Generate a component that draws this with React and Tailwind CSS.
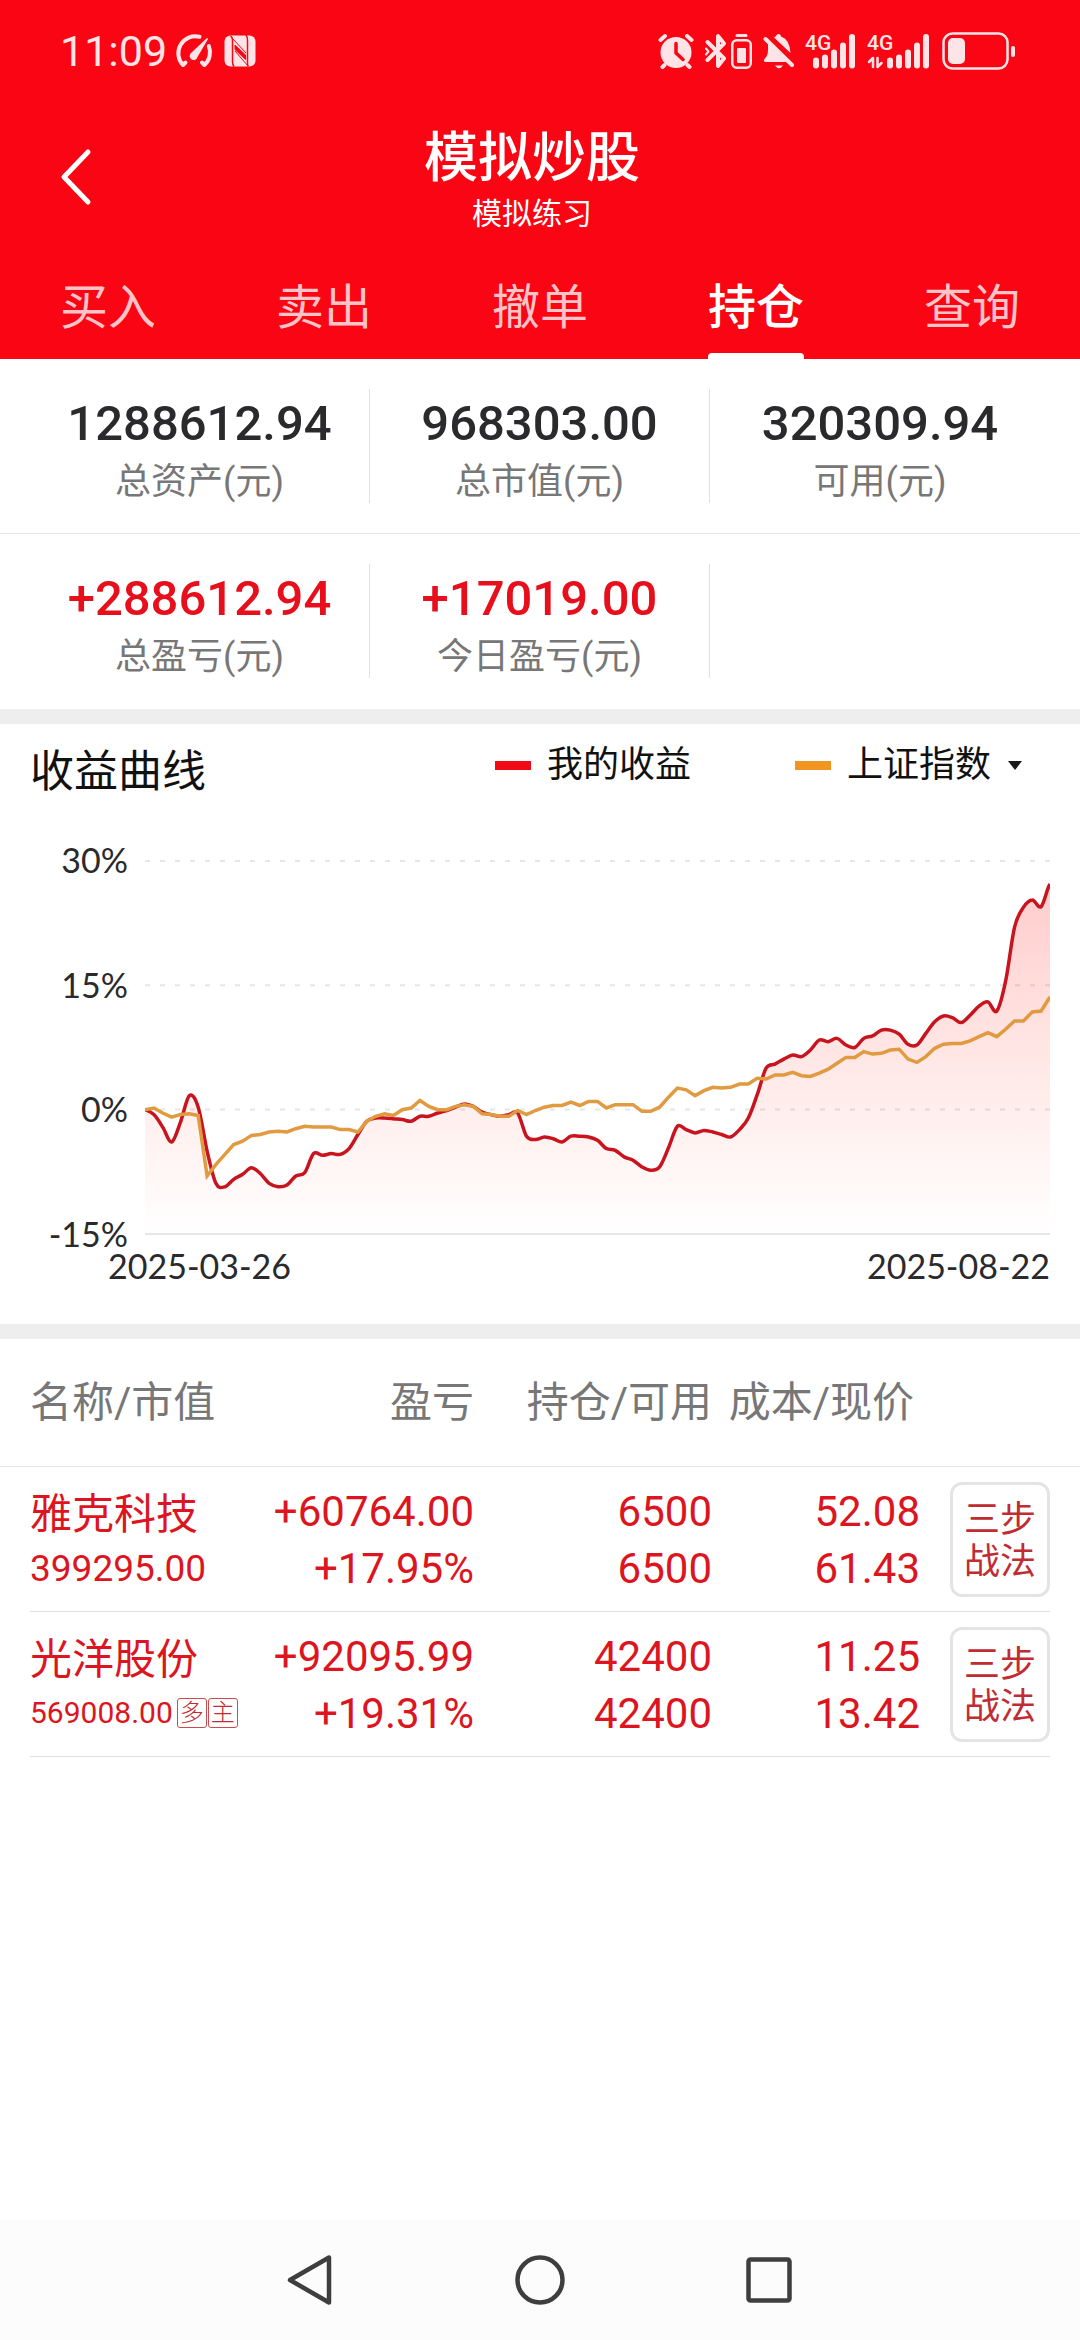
import React from "react";

const TABS = ["买入", "卖出", "撤单", "持仓", "查询"];

const STATS = [
  [
    { value: "1288612.94", label: "总资产(元)" },
    { value: "968303.00", label: "总市值(元)" },
    { value: "320309.94", label: "可用(元)" },
  ],
  [
    { value: "+288612.94", label: "总盈亏(元)", up: true },
    { value: "+17019.00", label: "今日盈亏(元)", up: true },
    null,
  ],
];

const HOLDINGS = [
  {
    name: "雅克科技",
    marketValue: "399295.00",
    tags: [],
    profit: ["+60764.00", "+17.95%"],
    shares: ["6500", "6500"],
    price: ["52.08", "61.43"],
  },
  {
    name: "光洋股份",
    marketValue: "569008.00",
    tags: ["多", "主"],
    profit: ["+92095.99", "+19.31%"],
    shares: ["42400", "42400"],
    price: ["11.25", "13.42"],
  },
];

/* Daily cumulative returns in percent */
const MINE = [
  0, -0.6, -2.1, -3.9, -1.5, 1.7, 0.3, -5, -8.9, -9.3, -8.4, -7.8, -7, -7.7, -8.9, -9.3, -9.1, -8,
  -7.6, -5.3, -5.5, -5.3, -5.4, -4.7, -3, -1.4, -1, -1, -1.1, -1.2, -1.4, -0.8, -0.8, -0.4, -0.1,
  0.3, 0.7, 0.4, -0.3, -0.6, -0.8, -0.6, -0.4, -3.2, -3.6, -3.3, -3.5, -3.9, -3.2, -3.2, -3.3, -3.7,
  -4.7, -4.9, -5.7, -6.1, -6.9, -7.3, -6.9, -4.6, -2, -2.4, -2.8, -2.5, -2.7, -3, -3.3, -2.4, -1,
  1.8, 5, 5.5, 6.1, 6.6, 6.4, 7.2, 8.4, 8.2, 8.6, 7.8, 7.5, 8.6, 8.9, 9.6, 9.6, 9.1, 7.9, 7.8, 9.2,
  10.6, 11.3, 11.1, 10.5, 11.4, 12.5, 13, 11.9, 15.5, 22, 24.4, 25.3, 24.5, 27.2,
];
const INDEX = [
  0, 0.2, -0.4, -0.9, -0.6, -0.5, -0.7, -8, -6.6, -5.4, -4.2, -3.8, -3.1, -3, -2.7, -2.6, -2.7, -2.3,
  -2, -2.1, -2.1, -2.1, -2.4, -2.4, -2.7, -1.4, -0.8, -0.5, -0.7, 0, 0.2, 1.1, 0.4, 0, 0, 0.4, 0.6,
  0.4, -0.5, -0.6, -0.8, -0.8, -0.1, -0.6, -0.1, 0.3, 0.5, 0.5, 0.9, 0.5, 1, 1, 0.2, 0.6, 0.6, 0.6,
  -0.2, -0.2, 0.3, 1.5, 2.6, 2.4, 1.7, 2.3, 2.7, 2.6, 2.7, 3.1, 3.1, 3.8, 3.7, 4.2, 4.2, 4.5, 4.1, 4,
  4.4, 4.9, 5.6, 6.3, 6.3, 7, 6.7, 6.8, 7.2, 7.3, 6.1, 5.7, 6.4, 7.4, 7.9, 8, 8, 8.3, 8.8, 9.3, 8.8,
  9.7, 10.7, 10.7, 11.8, 11.9, 13.6,
];

const CHART_W = 905;
const CHART_H = 375;
const toPoint = (v, i, all) => [(i * CHART_W) / (all.length - 1), 1 + ((30 - v) / 45) * 373];

function straightPath(points) {
  return "M" + points.map((p) => p[0].toFixed(1) + " " + p[1].toFixed(1)).join("L");
}

/* Cubic path whose tangent at a point follows its two neighbours */
function smoothPath(points) {
  const n = points.length - 1;
  const slope = points.map((_, i) => {
    const a = points[Math.max(i - 1, 0)][1];
    const b = points[Math.min(i + 1, n)][1];
    return (b - a) / 2;
  });
  let d = `M${points[0][0]} ${points[0][1].toFixed(1)}`;
  for (let i = 0; i < n; i++) {
    const [x0, y0] = points[i];
    const [x1, y1] = points[i + 1];
    const t = (x1 - x0) / 3;
    d += `C${(x0 + t).toFixed(1)} ${(y0 + slope[i] / 3).toFixed(1)} ${(x1 - t).toFixed(1)} ${(y1 - slope[i + 1] / 3).toFixed(1)} ${x1.toFixed(1)} ${y1.toFixed(1)}`;
  }
  return d;
}

function ReturnsChart() {
  const mine = smoothPath(MINE.map(toPoint));
  return (
    <svg viewBox="0 0 905 375" className="h-auto w-full" role="img" aria-label="收益曲线图">
      <defs>
        <linearGradient id="area" x1="0" y1="0" x2="0" y2="1">
          <stop offset="0" stopColor="#ff0000" stopOpacity="0.2" />
          <stop offset="0.95" stopColor="#ff2000" stopOpacity="0.01" />
          <stop offset="1" stopColor="#ff2000" stopOpacity="0" />
        </linearGradient>
      </defs>
      <g stroke="#e6e6e6" strokeWidth="2">
        <path d="M0 1H905M0 125.3H905M0 249.6H905" strokeDasharray="5 10" />
        <path d="M0 374H905" />
      </g>
      <path d={`${mine}V${CHART_H - 1}H0Z`} fill="url(#area)" />
      <path d={mine} fill="none" stroke="#c8141e" strokeWidth="3.500" />
      <path d={straightPath(INDEX.map(toPoint))} fill="none" stroke="#e09a40" strokeWidth="3.500" />
    </svg>
  );
}

function GaugeIcon() {
  return (
    <svg width="41" height="36" viewBox="0 0 41 36" fill="none" stroke="currentColor" strokeWidth="4" strokeLinecap="round" strokeLinejoin="round">
      <path d="M12.5 29.5L10 32A17 17 0 0 1 26.5 3.8M35.8 13A17 17 0 0 1 31.4 32L29 29.5" />
      <path d="M34 5L35 6L24.5 24A4 4 0 1 1 18 20Z" fill="currentColor" stroke="none" />
    </svg>
  );
}

function NfcIcon() {
  return (
    <svg width="32" height="32" viewBox="0 0 32 32" fill="none" stroke="#fa0513">
      <rect x="0.5" y="0.5" width="31" height="31" rx="6" fill="currentColor" stroke="none" />
      <path d="M6.500 1Q8.500 2 8.500 5V27Q8.500 30 10 31.500M22 0Q23.500 2 23.500 5V28Q23.500 31 24.500 31.500" strokeWidth="1.500" />
      <path d="M8 3L22 18" strokeWidth="1" />
      <path d="M11 10L21.500 20V24.500L11 14.500ZM11 16L24 31" strokeWidth="1" fill="#fa0513" />
    </svg>
  );
}

function AlarmIcon() {
  return (
    <svg width="36" height="36" viewBox="0 0 36 36" fill="none" stroke="currentColor" strokeWidth="4" strokeLinecap="round">
      <circle cx="18" cy="19.500" r="15.500" fill="currentColor" stroke="none" />
      <path d="M2.500 7L7 3M33.500 7L29 3M6.500 32L4.500 34M29.500 32L31.500 34" />
      <path d="M18 10.500V20L25 26.500" stroke="#fa0513" strokeWidth="3.500" strokeLinejoin="round" />
    </svg>
  );
}

function BluetoothIcon() {
  return (
    <svg width="22" height="36" viewBox="0 0 22 36" fill="none" stroke="currentColor" strokeWidth="4" strokeLinecap="round" strokeLinejoin="round">
      <path d="M2.500 9L19 25.500L13 33V22M2.500 27L19 10.500L13 3V14" />
      <path d="M1 15.500L3.500 18.500L1 21.500" strokeWidth="2" />
    </svg>
  );
}

function DeviceBatteryIcon() {
  return (
    <svg width="21" height="36" viewBox="0 0 21 36" fill="none" stroke="currentColor">
      <path d="M6 2.500H15" strokeWidth="3" strokeLinecap="round" />
      <rect x="1.250" y="7.250" width="18.500" height="27.500" rx="4.500" strokeWidth="2.500" />
      <rect x="6" y="15" width="9" height="15" rx="1" fill="currentColor" stroke="none" />
    </svg>
  );
}

function MutedIcon() {
  return (
    <svg width="31" height="36" viewBox="0 0 31 36" fill="currentColor">
      <path d="M11 4.500Q13 3.500 13.500 2Q15.500 0 17.500 2L18 3.500Q26.500 6 27.500 20Z" />
      <path d="M5 10L23.500 29H2Q0 28 1.500 26Q5 23 5 17Z" />
      <path d="M12 32.500H20Q16 38 12 32.500Z" />
      <path d="M2.500 6L29 32" stroke="currentColor" strokeWidth="4" strokeLinecap="round" />
    </svg>
  );
}

function SignalIcon({ transfer }) {
  const shift = transfer ? 12 : 0;
  const heights = [11, 14, 19, 26, 34.5];
  return (
    <svg
      width={transfer ? 64 : 51}
      height="36"
      viewBox={transfer ? "0 0 64 36" : "0 0 51 36"}
      fill="currentColor"
      className="overflow-visible"
    >
      <text x="0" y="17" fontSize="21" className="font-[Roboto,sans-serif] font-medium">4G</text>
      {heights.map((h, i) => (
        <rect key={h} x={8 + shift + i * 9} y={35.5 - h} width="6" height={h} rx="3" />
      ))}
      {transfer && (
        <g fill="none" stroke="currentColor" strokeWidth="2.500" strokeLinecap="round" strokeLinejoin="round">
          <path d="M6 34V25L2 29M10.500 25V34L14.500 30" />
        </g>
      )}
    </svg>
  );
}

function BatteryIcon() {
  return (
    <svg width="74" height="38" viewBox="0 0 74 38" fill="none">
      <rect x="1.500" y="1.500" width="64" height="35" rx="9" stroke="currentColor" strokeWidth="2.500" />
      <rect x="6" y="6" width="17" height="26" rx="5" fill="currentColor" />
      <rect x="69" y="14" width="4" height="11" rx="2" fill="currentColor" />
    </svg>
  );
}

function StatusBar() {
  return (
    <div className="flex h-[102px] items-center pr-16 pl-[60px] text-[#ffe4e7]">
      <span className="text-[43px]">11:09</span>
      <span className="ml-1.5 flex items-center gap-2.5">
        <GaugeIcon />
        <NfcIcon />
      </span>
      <span className="ml-auto flex items-center gap-[11px]">
        <AlarmIcon />
        <span className="flex gap-1">
          <BluetoothIcon />
          <DeviceBatteryIcon />
        </span>
        <MutedIcon />
        <SignalIcon />
        <SignalIcon transfer />
        <BatteryIcon />
      </span>
    </div>
  );
}

function Header() {
  return (
    <header className="bg-[#fa0513] text-white">
      <StatusBar />
      <div className="grid h-[150px] grid-cols-[120px_1fr_136px] items-center">
        <button type="button" aria-label="返回" className="pl-[60px]">
          <svg width="33" height="58" viewBox="0 0 33 58" fill="none" stroke="currentColor" strokeWidth="5" strokeLinecap="round" strokeLinejoin="round">
            <path d="M28 4L4 29L28 54" />
          </svg>
        </button>
        <div className="pt-1 text-center">
          <h1 className="text-[54px] leading-[70px] font-medium">模拟炒股</h1>
          <p className="text-[30px] leading-[40px]">模拟练习</p>
        </div>
      </div>
      <nav className="grid h-[107px] grid-cols-5">
        {TABS.map((tab) => {
          const active = tab === "持仓";
          return (
            <button
              key={tab}
              type="button"
              aria-current={active ? "page" : undefined}
              className={
                active
                  ? "relative pt-1 text-[48px] font-medium text-white"
                  : "pt-1 text-[48px] text-[#ffc3c8]"
              }
            >
              {tab}
              {active && (
                <span className="absolute bottom-0 left-1/2 h-1.5 w-24 -translate-x-1/2 rounded-t bg-white" />
              )}
            </button>
          );
        })}
      </nav>
    </header>
  );
}

function StatRow({ cells, last }) {
  return (
    <dl
      className={
        last
          ? "grid h-[175px] grid-cols-3 px-[30px] py-[30px]"
          : "grid h-[175px] grid-cols-3 border-b border-[#e5e5e7] px-[30px] py-[30px]"
      }
    >
      {cells.map((cell, i) => (
        <div
          key={i}
          className={
            i < 2
              ? "flex h-[114px] flex-col-reverse justify-end border-r border-[#e0e0e0] text-center"
              : "flex h-[114px] flex-col-reverse justify-end text-center"
          }
        >
          {cell && (
            <>
              <dt className="text-[36px] leading-[46px] text-[#777]">{cell.label}</dt>
              <dd
                className={
                  cell.up
                    ? "text-[49px] leading-[70px] font-medium text-[#e60f1b]"
                    : "text-[49px] leading-[70px] font-medium text-[#2a2a2c]"
                }
              >
                {cell.value}
              </dd>
            </>
          )}
        </div>
      ))}
    </dl>
  );
}

function CurveSection() {
  return (
    <section className="border-b-[15px] border-[#eee]">
      <div className="flex h-[119px] items-start pt-[18px] pr-[58px] pl-[30px] text-[#111]">
        <h2 className="text-[44px] leading-[60px]">收益曲线</h2>
        <div className="ml-auto flex items-center gap-[104px] text-[36px] leading-[46px]">
          <div className="flex items-center gap-4">
            <span className="h-[9px] w-9 bg-[#f00a16]" />
            我的收益
          </div>
          <label className="flex items-center gap-4">
            <span className="h-[9px] w-9 bg-[#f09422]" />
            <select aria-label="对比指数" className="appearance-none bg-transparent">
              <option>上证指数</option>
            </select>
            <svg width="14" height="9" viewBox="0 0 14 9" fill="#1a1a1a">
              <path d="M0 0H14L7 9Z" />
            </svg>
          </label>
        </div>
      </div>
      <div className="flex items-center gap-[17px] pr-[30px]">
        <div className="flex h-[408px] w-32 flex-col justify-between text-right font-[Lato,sans-serif] text-[34px] leading-[34px] text-[#2a2a2c]">
          <span>30%</span>
          <span>15%</span>
          <span>0%</span>
          <span>-15%</span>
        </div>
        <div className="flex-1">
          <ReturnsChart />
        </div>
      </div>
      <div className="flex justify-between pr-[30px] pb-[43px] pl-[108px] font-[Lato,sans-serif] text-[34px] leading-[30px] text-[#2a2a2c]">
        <span>2025-03-26</span>
        <span>2025-08-22</span>
      </div>
    </section>
  );
}

function PairCell({ values }) {
  return (
    <td className="border-b border-[#e0e0e0] pt-4 align-top text-right text-[42px] leading-[57px]">
      <div>{values[0]}</div>
      <div>{values[1]}</div>
    </td>
  );
}

function HoldingsTable() {
  return (
    <table className="w-full table-fixed border-collapse whitespace-nowrap">
      <colgroup>
        <col className="w-[30px]" />
        <col />
        <col className="w-[215px]" />
        <col className="w-[238px]" />
        <col className="w-[208px]" />
        <col className="w-[130px]" />
        <col className="w-[30px]" />
      </colgroup>
      <thead>
        <tr className="h-[127px] border-b border-[#e5e5e7] text-right text-[42px] text-[#777]">
          <td />
          <th scope="col" className="text-left font-normal">名称/市值</th>
          <th scope="col" className="font-normal">盈亏</th>
          <th scope="col" className="font-normal">持仓/可用</th>
          <th scope="col" className="pr-1.5 font-normal">成本/现价</th>
          <td />
          <td />
        </tr>
      </thead>
      <tbody className="text-[#dc1520]">
        {HOLDINGS.map((h) => (
          <tr key={h.name} className="h-[145px]">
            <td />
            <td className="border-b border-[#e0e0e0] pt-4 align-top">
              <div className="text-[42px] leading-[64px]">{h.name}</div>
              {h.tags.length === 0 ? (
                <div className="text-[37px] leading-[44px]">{h.marketValue}</div>
              ) : (
                <div className="flex items-center gap-1 text-[30px] leading-[42px]">
                  {h.marketValue}
                  <span className="flex gap-px">
                    {h.tags.map((tag) => (
                      <span
                        key={tag}
                        className="size-[30px] rounded-[3px] border border-[#cc4a4e] text-center text-[24px] leading-[28px] font-light text-[#c02c32]"
                      >
                        {tag}
                      </span>
                    ))}
                  </span>
                </div>
              )}
            </td>
            <PairCell values={h.profit} />
            <PairCell values={h.shares} />
            <PairCell values={h.price} />
            <td className="border-b border-[#e0e0e0] pt-[15px] pl-[30px] align-top">
              <button
                type="button"
                className="block h-[115px] w-[100px] rounded-xl border-[3px] border-[#e4e4e6] pt-1 text-[36px] leading-[42px] text-[#c02c32]"
              >
                三步
                <br />
                战法
              </button>
            </td>
            <td />
          </tr>
        ))}
      </tbody>
    </table>
  );
}

function SystemNav() {
  return (
    <footer className="mt-auto flex h-[120px] items-center justify-center gap-[180px] bg-[#fcfcfc] text-[#3e3e3e]">
      <button type="button" aria-label="返回">
        <svg width="50" height="54" viewBox="0 0 50 54" fill="none" stroke="currentColor" strokeWidth="4.500" strokeLinejoin="round">
          <path d="M44 4.500V49.500L5 27Z" />
        </svg>
      </button>
      <button type="button" aria-label="主页">
        <svg width="50" height="50" viewBox="0 0 50 50" fill="none" stroke="currentColor" strokeWidth="4.500">
          <circle cx="25" cy="25" r="22.500" />
        </svg>
      </button>
      <button type="button" aria-label="最近任务">
        <svg width="50" height="50" viewBox="0 0 50 50" fill="none" stroke="currentColor" strokeWidth="4.500">
          <rect x="3.500" y="4.500" width="41" height="41" rx="2" />
        </svg>
      </button>
    </footer>
  );
}

export default function App() {
  return (
    <div className="flex min-h-screen flex-col bg-white font-[Roboto,'Noto_Sans_CJK_SC',sans-serif]">
      <Header />
      <main>
        <section className="border-b-[15px] border-[#eee]">
          <StatRow cells={STATS[0]} />
          <StatRow cells={STATS[1]} last />
        </section>
        <CurveSection />
        <HoldingsTable />
      </main>
      <SystemNav />
    </div>
  );
}
